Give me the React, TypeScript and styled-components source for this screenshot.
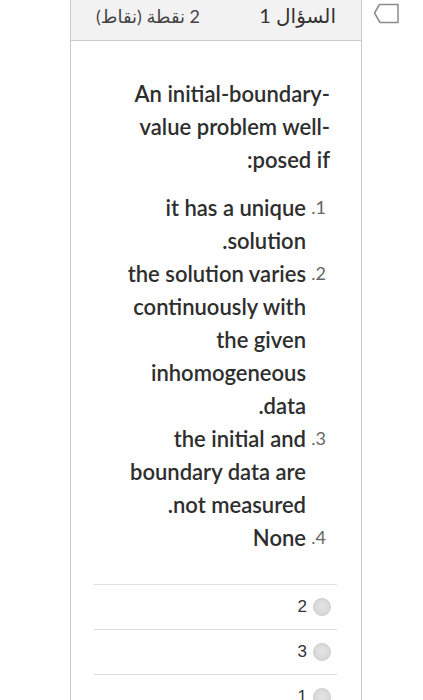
import React from "react";
import styled, { createGlobalStyle } from "styled-components";

const GlobalStyle = createGlobalStyle`
  * { box-sizing: border-box; }
  body {
    margin: 0;
    background: #fff;
    font-family: Lato, "DejaVu Sans", sans-serif;
    color: #333;
  }
`;

const options = [
  "it has a unique solution.",
  "the solution varies continuously with the given inhomogeneous data.",
  "the initial and boundary data are not measured.",
  "None",
];

const choices = ["2", "3", "1"];

const App: React.FC = () => {
  return (
    <>
      <GlobalStyle />
      <Page>
        <Card>
          <Header dir="rtl">
            <QuestionNo>السؤال 1</QuestionNo>
            <Points>2 نقطة (نقاط)</Points>
          </Header>
          <Body dir="rtl">
            <Question>An initial-boundary-value problem well-posed if:</Question>
            <Options>
              {options.map((text, index) => (
                <Option key={index}>
                  <OptionNo>{index + 1}.</OptionNo>
                  <OptionText>{text}</OptionText>
                </Option>
              ))}
            </Options>
            <Choices>
              {choices.map((label) => (
                <Choice key={label}>
                  <Radio />
                  <ChoiceLabel>{label}</ChoiceLabel>
                </Choice>
              ))}
            </Choices>
          </Body>
        </Card>
        <FlagButton>
          <svg width="27" height="21" viewBox="0 0 27 21">
            <path
              d="M1.5 10 L6.5 1.5 H25 V19.5 H7 Z"
              fill="none"
              stroke="#8c8c8c"
              strokeWidth="1.5"
              strokeLinejoin="round"
            />
          </svg>
        </FlagButton>
      </Page>
    </>
  );
};

export default App;

const Page = styled.div`
  display: flex;
  align-items: flex-start;
  padding-left: 70px;
`;

const Card = styled.div`
  width: 292px;
  border: 1px solid #cbcbcb;
  border-top: none;
  padding-bottom: 40px;
`;

const Header = styled.div`
  height: 41px;
  padding: 0 25px 9px;
  display: flex;
  justify-content: space-between;
  align-items: center;
  background: #f2f2f2;
  border-bottom: 1px solid #cbcbcb;
`;

const QuestionNo = styled.span`
  font-size: 20px;
  color: #333;
`;

const Points = styled.span`
  font-size: 18px;
  color: #444;
`;

const Body = styled.div`
  padding: 36px 31px 0 24px;
`;

const Question = styled.div`
  width: 210px;
  font-size: 22px;
  font-weight: 600;
  line-height: 33px;
  color: #2e2e2e;
`;

const Options = styled.ol`
  list-style: none;
  margin: 15px 4px 0 0;
  padding: 0;
`;

const Option = styled.li`
  display: grid;
  grid-template-columns: 20px 186px;
  line-height: 33px;
`;

const OptionNo = styled.span`
  font-size: 18px;
  font-weight: 400;
  color: #666;
`;

const OptionText = styled.span`
  font-size: 22px;
  font-weight: 600;
  color: #2e2e2e;
`;

const Choices = styled.div`
  margin: 30px -7px 0 -1px;
`;

const Choice = styled.div`
  height: 45px;
  display: flex;
  align-items: center;
  gap: 6px;
  padding-right: 6px;
  border-top: 1px solid #dedede;
`;

const Radio = styled.span`
  width: 18px;
  height: 18px;
  border-radius: 50%;
  border: 1px solid #cdcdcd;
  background: radial-gradient(circle at 50% 45%, #e4e4e4, #d2d2d2);
`;

const ChoiceLabel = styled.span`
  font-family: "Liberation Sans", Arial, sans-serif;
  font-size: 17px;
  color: #333;
`;

const FlagButton = styled.div`
  margin: 3px 0 0 11px;
  display: flex;
`;
